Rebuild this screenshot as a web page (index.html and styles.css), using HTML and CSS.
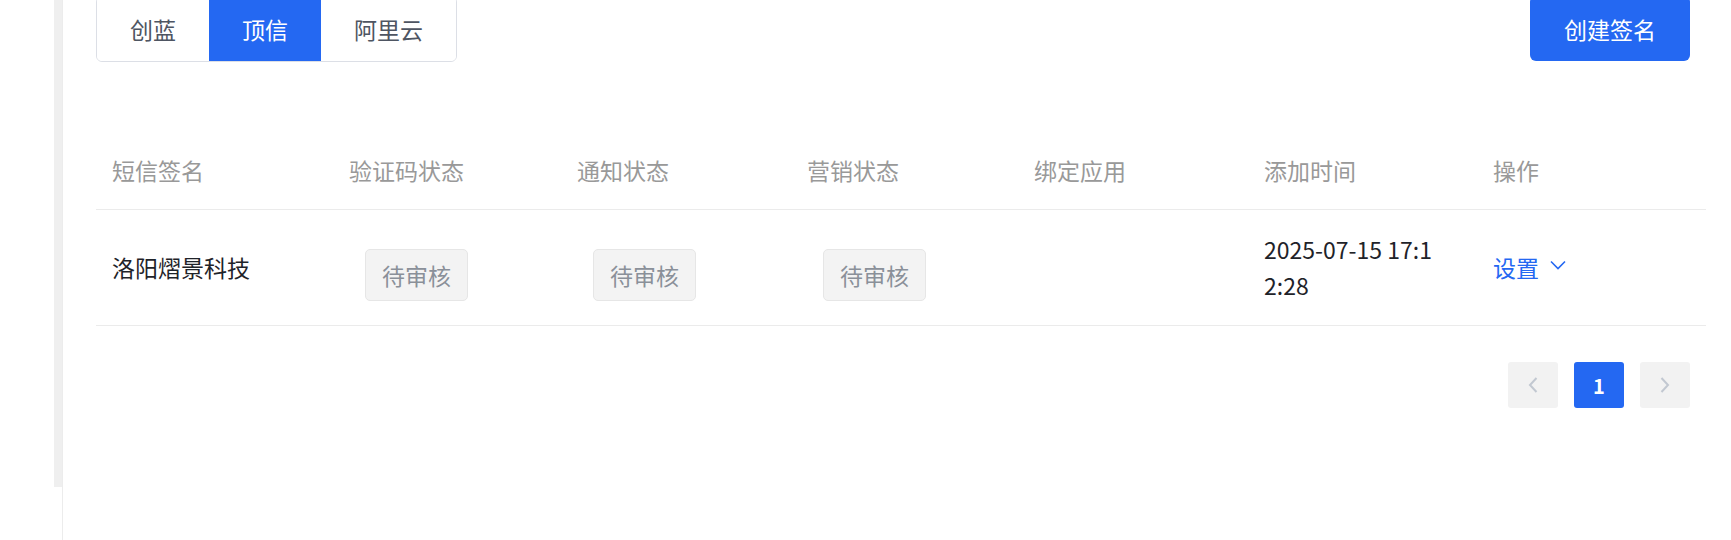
FILE: index.html
```html
<!DOCTYPE html>
<html lang="zh-CN">
<head>
    <meta charset="UTF-8">
    <meta name="viewport" content="width=device-width, initial-scale=1.0">
    <title>短信签名</title>
    <link rel="stylesheet" href="styles.css">
</head>
<body>
    <aside class="sidebar">
        <div class="sidebar-track"></div>
    </aside>

    <main class="content">
        <div class="toolbar">
            <div class="tabs">
                <button type="button" class="tab">创蓝</button>
                <button type="button" class="tab active">顶信</button>
                <button type="button" class="tab">阿里云</button>
            </div>
            <button type="button" class="create-btn">创建签名</button>
        </div>

        <table class="sign-table">
            <colgroup>
                <col style="width: 237px">
                <col style="width: 228px">
                <col style="width: 230px">
                <col style="width: 227px">
                <col style="width: 230px">
                <col style="width: 229px">
                <col style="width: 229px">
            </colgroup>
            <thead>
                <tr>
                    <th>短信签名</th>
                    <th>验证码状态</th>
                    <th>通知状态</th>
                    <th>营销状态</th>
                    <th>绑定应用</th>
                    <th>添加时间</th>
                    <th>操作</th>
                </tr>
            </thead>
            <tbody>
                <tr>
                    <td>洛阳熠景科技</td>
                    <td><span class="status">待审核</span></td>
                    <td><span class="status">待审核</span></td>
                    <td><span class="status">待审核</span></td>
                    <td></td>
                    <td><div class="time">2025-07-15 17:12:28</div></td>
                    <td>
                        <a href="#" class="action">设置
                            <svg class="action-arrow" width="16" height="10" viewBox="0 0 16 10">
                                <polyline points="1,1.5 8,8.5 15,1.5" fill="none" stroke="currentColor" stroke-width="1.6"/>
                            </svg>
                        </a>
                    </td>
                </tr>
            </tbody>
        </table>

        <div class="pager">
            <button type="button" class="page-btn">
                <svg width="10" height="16" viewBox="0 0 10 16">
                    <polyline points="8.5,1 2,8 8.5,15" fill="none" stroke="currentColor" stroke-width="2"/>
                </svg>
            </button>
            <button type="button" class="page-btn current">1</button>
            <button type="button" class="page-btn">
                <svg width="10" height="16" viewBox="0 0 10 16">
                    <polyline points="1.5,1 8,8 1.5,15" fill="none" stroke="currentColor" stroke-width="2"/>
                </svg>
            </button>
        </div>
    </main>
</body>
</html>
```

FILE: styles.css
```css
/* Basic Reset */
* {
    box-sizing: border-box;
    margin: 0;
    padding: 0;
}

body {
    font-family: "Noto Sans CJK SC", "Noto Sans", sans-serif;
    font-size: 23px;
    line-height: 36px;
    color: #1f2329;
    background-color: #fff;
    display: flex;
    height: 540px;
    overflow: hidden;
}

.sidebar {
    width: 63px;
    flex-shrink: 0;
    border-right: 1px solid #ececec;
    display: flex;
    justify-content: flex-end;
}

.sidebar-track {
    width: 8px;
    height: 487px;
    background-color: #efefef;
}

.content {
    flex: 1;
    min-width: 0;
    padding: 0 41px 0 33px;
}

/* Top bar with provider tabs and create button */
.toolbar {
    display: flex;
    justify-content: space-between;
    align-items: flex-start;
    margin-top: -4px;
}

.tabs {
    display: flex;
    border: 1px solid #dcdfe6;
    border-radius: 6px;
    overflow: hidden;
}

.tab {
    height: 64px;
    padding: 0 33px;
    border: none;
    background-color: #fff;
    font-family: inherit;
    font-size: 23px;
    color: #4e5562;
    cursor: pointer;
}

.tab.active {
    background-color: #2468f2;
    color: #fff;
}

.create-btn {
    height: 65px;
    width: 160px;
    border: none;
    border-radius: 6px;
    background-color: #2468f2;
    color: #fff;
    font-family: inherit;
    font-size: 23px;
    cursor: pointer;
}

/* Table */
.sign-table {
    width: 1610px;
    table-layout: fixed;
    border-collapse: collapse;
    margin-top: 69px;
}

.sign-table th {
    text-align: left;
    font-weight: normal;
    color: #999;
    padding: 21px 16px;
    border-bottom: 1px solid #ebebeb;
}

.sign-table td {
    padding: 21px 16px 22px;
    border-bottom: 1px solid #ebebeb;
    vertical-align: middle;
}

.status {
    display: inline-block;
    margin: 16px 0 0 16px;
    padding: 7px 16px;
    border: 1px solid #e6e6e6;
    border-radius: 5px;
    background-color: #f3f3f3;
    color: #8a9099;
}

.time {
    width: 182px;
    word-break: break-all;
}

.action {
    color: #2468f2;
    text-decoration: none;
    display: inline-flex;
    align-items: center;
    gap: 11px;
}

.action-arrow {
    margin-top: -4px;
}

/* Pagination */
.pager {
    display: flex;
    justify-content: flex-end;
    gap: 16px;
    margin-top: 36px;
}

.page-btn {
    width: 50px;
    height: 46px;
    border: none;
    border-radius: 3px;
    background-color: #f2f2f2;
    color: #c2c8d1;
    display: flex;
    align-items: center;
    justify-content: center;
    font-family: inherit;
    font-size: 20px;
    font-weight: bold;
}

.page-btn.current {
    background-color: #2468f2;
    color: #fff;
}
```
